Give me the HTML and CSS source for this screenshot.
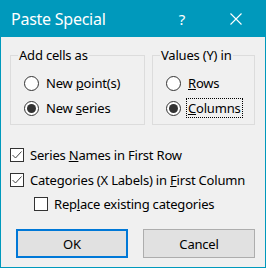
FILE: index.html
```html
<!DOCTYPE html>
<html lang="en">

<head>
    <meta charset="UTF-8">
    <title>Paste Special</title>
    <link rel="stylesheet" href="styles.css">
</head>

<body>
    <div class="window">
        <div class="titlebar">
            <span class="title">Paste Special</span>
            <span class="help">?</span>
            <svg class="close" width="12" height="12" viewBox="0 0 12 12">
                <path d="M0.5 0.5 L11.5 11.5 M11.5 0.5 L0.5 11.5" stroke="#fff" stroke-width="1.1" fill="none"/>
            </svg>
        </div>

        <div class="content">
            <div class="groups">
                <fieldset class="group group-add">
                    <legend>Add cells as</legend>
                    <div class="option">
                        <span class="radio"></span>
                        <span class="label">New <u>p</u>oint(s)</span>
                    </div>
                    <div class="option">
                        <span class="radio on"></span>
                        <span class="label">New <u>s</u>eries</span>
                    </div>
                </fieldset>

                <fieldset class="group group-values">
                    <legend>Values (Y) in</legend>
                    <div class="option">
                        <span class="radio"></span>
                        <span class="label"><u>R</u>ows</span>
                    </div>
                    <div class="option">
                        <span class="radio on"></span>
                        <span class="label focused"><u>C</u>olumns</span>
                    </div>
                </fieldset>
            </div>

            <div class="checks">
                <div class="option check-row">
                    <span class="checkbox">
                        <svg width="12" height="12" viewBox="0 0 12 12">
                            <path d="M1.5 6 L4.5 9 L10.5 2.5" stroke="#444" stroke-width="1" fill="none"/>
                        </svg>
                    </span>
                    <span class="label">Series <u>N</u>ames in First Row</span>
                </div>
                <div class="option check-row">
                    <span class="checkbox">
                        <svg width="12" height="12" viewBox="0 0 12 12">
                            <path d="M1.5 6 L4.5 9 L10.5 2.5" stroke="#444" stroke-width="1" fill="none"/>
                        </svg>
                    </span>
                    <span class="label">Categories (X Labels) in <u>F</u>irst Column</span>
                </div>
                <div class="option check-row nested">
                    <span class="checkbox"></span>
                    <span class="label">Rep<u>l</u>ace existing categories</span>
                </div>
            </div>

            <div class="buttons">
                <button type="button" class="btn btn-default">OK</button>
                <button type="button" class="btn">Cancel</button>
            </div>
        </div>
    </div>
</body>

</html>
```

FILE: styles.css
```css
html,
body {
    margin: 0;
    padding: 0;
    background: #f0f0f0;
}

.window {
    width: 266px;
    height: 268px;
    box-sizing: border-box;
    border: 1px solid #0099bc;
    border-top: 0;
    background: #f0f0f0;
    font-family: "Noto Sans", sans-serif;
    font-size: 13px;
    letter-spacing: -0.2px;
    color: #000;
}

.titlebar {
    height: 37px;
    display: flex;
    align-items: center;
    padding: 0 23px 0 10px;
    background: #0099bc;
    color: #fff;
}

.title {
    font-size: 16px;
    line-height: 20px;
    letter-spacing: -0.25px;
}

.help {
    margin-left: auto;
    margin-right: 45px;
    font-size: 15px;
    line-height: 20px;
}

.content {
    padding: 10px 10px 0 9px;
}

.groups {
    display: flex;
    gap: 7px;
}

.group {
    margin: 0;
    min-width: 0;
    box-sizing: border-box;
    border: 1px solid #dcdcdc;
    padding: 10px 4px 6px 13px;
}

.group-add {
    width: 135px;
}

.group-values {
    width: 103px;
}

.group legend {
    margin-left: -6px;
    padding: 0 1px;
    line-height: 16px;
}

.option {
    display: flex;
    align-items: center;
    height: 20px;
}

.option + .option {
    margin-top: 5px;
}

.label {
    margin-left: 5px;
    padding: 1px;
    border: 1px dotted transparent;
    line-height: 16px;
    white-space: nowrap;
}

.label.focused {
    border-color: #000;
}

.radio {
    position: relative;
    width: 15px;
    height: 15px;
    box-sizing: border-box;
    border: 1px solid #333;
    border-radius: 50%;
    background: #fff;
    flex: none;
}

.radio.on::after {
    content: "";
    position: absolute;
    left: 2px;
    top: 2px;
    width: 9px;
    height: 9px;
    border-radius: 50%;
    background: #333;
}

.checks {
    margin-top: 20px;
}

.check-row + .check-row {
    margin-top: 5px;
}

.check-row.nested {
    margin-top: 4px;
    padding-left: 24px;
}

.checkbox {
    width: 14px;
    height: 14px;
    box-sizing: border-box;
    border: 1px solid #333;
    background: #fff;
    display: flex;
    align-items: center;
    justify-content: center;
    flex: none;
}

.checks .label {
    margin-left: 4px;
}

.buttons {
    display: flex;
    justify-content: flex-end;
    gap: 15px;
    margin-top: 15px;
}

.btn {
    width: 112px;
    height: 29px;
    box-sizing: border-box;
    border: 1px solid #adadad;
    background: #e1e1e1;
    font-family: "Noto Sans", sans-serif;
    font-size: 13px;
    letter-spacing: -0.2px;
    color: #000;
    padding: 0;
}

.btn-default {
    border: 2px solid #0078d7;
}
```
